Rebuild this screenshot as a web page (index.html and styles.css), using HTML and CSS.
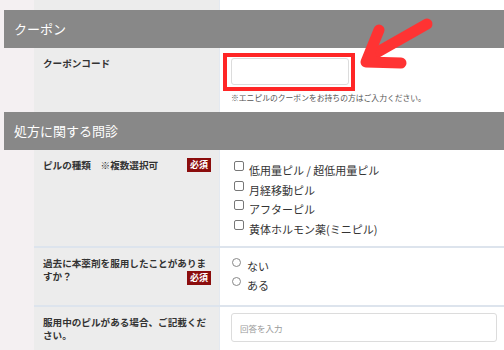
FILE: index.html
```html
<!DOCTYPE html>
<html lang="ja">
<head>
    <meta charset="UTF-8">
    <meta name="viewport" content="width=device-width, initial-scale=1.0">
    <title>問診フォーム</title>
    <link rel="stylesheet" href="styles.css">
</head>
<body>

    <div class="page">
        <!-- end of the previous row -->
        <div class="row tail">
            <div class="label"></div>
            <div class="value"></div>
        </div>

        <h2 class="section-title">クーポン</h2>

        <div class="row coupon">
            <div class="label">クーポンコード</div>
            <div class="value">
                <input type="text" class="coupon-input">
                <p class="note">※エニピルのクーポンをお持ちの方はご入力ください。</p>
            </div>
        </div>

        <h2 class="section-title">処方に関する問診</h2>

        <div class="row">
            <div class="label">ピルの種類　※複数選択可<span class="required">必須</span></div>
            <div class="value">
                <ul class="choices">
                    <li><input type="checkbox"><span>低用量ピル / 超低用量ピル</span></li>
                    <li><input type="checkbox"><span>月経移動ピル</span></li>
                    <li><input type="checkbox"><span>アフターピル</span></li>
                    <li><input type="checkbox"><span>黄体ホルモン薬(ミニピル)</span></li>
                </ul>
            </div>
        </div>

        <div class="row ruled">
            <div class="label">過去に本薬剤を服用したことがありますか？<span class="required low">必須</span></div>
            <div class="value">
                <ul class="choices radios">
                    <li><input type="radio" name="past"><span>ない</span></li>
                    <li><input type="radio" name="past"><span>ある</span></li>
                </ul>
            </div>
        </div>

        <div class="row ruled">
            <div class="label">服用中のピルがある場合、ご記載ください。</div>
            <div class="value">
                <input type="text" class="answer" placeholder="回答を入力">
            </div>
        </div>

        <!-- annotation drawn over the screenshot -->
        <div class="mark"></div>
        <svg class="arrow" width="504" height="350" viewBox="0 0 504 350">
            <path d="M427 24 L369 57" />
            <path d="M379 30 L366 62 L401 63" />
        </svg>
    </div>

</body>
</html>
```

FILE: styles.css
```css
body {
    margin: 0;
    padding: 0;
    background-color: #f4f0f2;
    font-family: "Noto Sans CJK JP", "Noto Sans", sans-serif;
    color: #333;
}
.page {
    position: relative;
    width: 504px;
    height: 350px;
    overflow: hidden;
}
.section-title {
    margin: 0 0 0 4px;
    height: 38px;
    line-height: 38px;
    padding-left: 10px;
    background-color: #888888;
    color: #ffffff;
    font-size: 13px;
    font-weight: normal;
}
.row {
    display: grid;
    grid-template-columns: 185px 1fr;
    margin-left: 34px;
}
.row.ruled {
    border-top: 2px solid #dde4ed;
}
.row.tail {
    height: 10px;
}
.label {
    background-color: #ececec;
    padding: 9px 8px 0 9px;
    font-size: 9.6px;
    font-weight: bold;
    line-height: 12.5px;
}
.value {
    background-color: #ffffff;
    border-left: 1px solid #e4e9f0;
    padding: 0 7px 0 11px;
}
.required {
    float: right;
    width: 24px;
    height: 14px;
    line-height: 14px;
    margin-top: -1px;
    background-color: #8b0d0d;
    color: #ffffff;
    text-align: center;
    font-size: 9px;
    font-weight: bold;
}
.required.low {
    margin-top: 1px;
}
.coupon {
    height: 64px;
}
.coupon-input {
    display: block;
    box-sizing: border-box;
    width: 118px;
    height: 27px;
    margin: 10px 0 0;
    border: 1px solid #dcdcdc;
    border-radius: 3px;
}
.note {
    margin: 7px 0 0;
    font-size: 7.8px;
    color: #555;
}
.choices {
    list-style: none;
    margin: 0;
    padding: 11px 0 7px 3px;
}
.choices li {
    display: flex;
    align-items: flex-start;
    height: 19.5px;
    font-size: 11px;
}
.choices li span {
    padding-top: 1px;
}
.choices input {
    appearance: none;
    width: 10px;
    height: 10px;
    margin: 0 5px 0 0;
    border: 1px solid #777;
    border-radius: 2px;
    background: #fff;
}
.radios {
    padding: 10px 0 9px 1px;
}
.radios li {
    height: 19px;
}
.radios input {
    width: 9px;
    height: 9px;
    margin-right: 6px;
    border-radius: 50%;
    border-color: #888;
}
.radios li span {
    padding-top: 0;
}
.answer {
    display: block;
    box-sizing: border-box;
    width: 100%;
    height: 29px;
    margin: 6px 0 10px;
    padding: 0 8px;
    border: 1px solid #dcdcdc;
    border-radius: 3px;
    font-family: inherit;
    font-size: 8.5px;
}
.answer::placeholder {
    color: #999;
}
.mark {
    position: absolute;
    left: 223px;
    top: 53px;
    width: 124px;
    height: 30px;
    border: 4px solid #ff2626;
}
.arrow {
    position: absolute;
    left: 0;
    top: 0;
    pointer-events: none;
}
.arrow path {
    fill: none;
    stroke: #ff3333;
    stroke-width: 11;
    stroke-linecap: round;
    stroke-linejoin: round;
}
```
